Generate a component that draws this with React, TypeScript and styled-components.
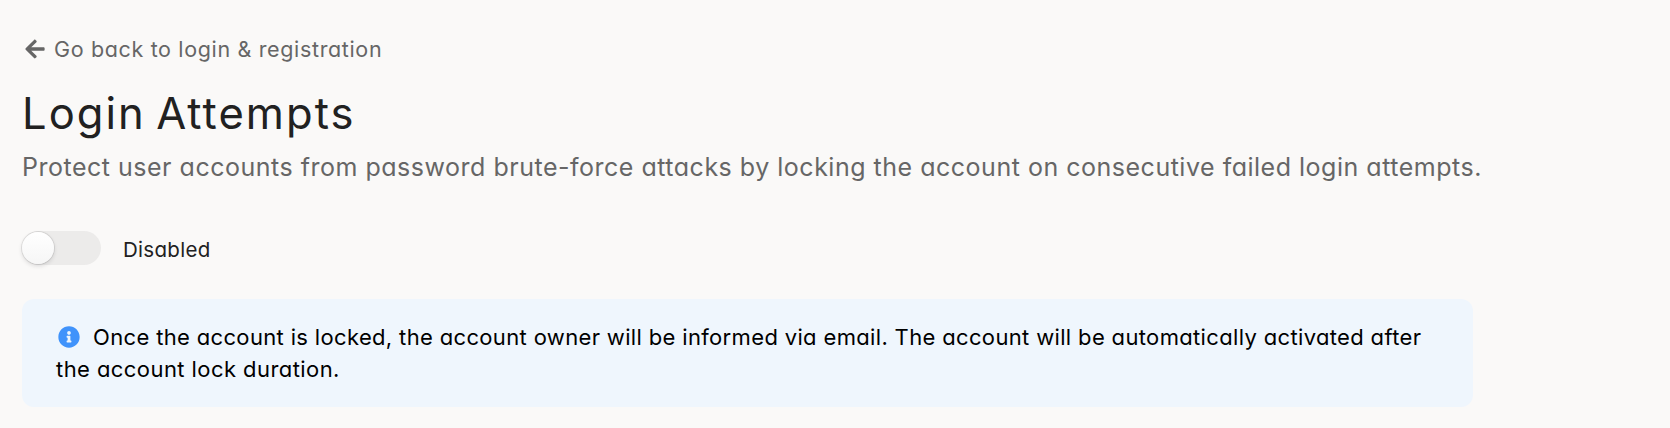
import React, { useState } from "react";
import styled, { createGlobalStyle } from "styled-components";
import { FaArrowLeft, FaInfoCircle } from "react-icons/fa";

const GlobalStyle = createGlobalStyle`
  * { box-sizing: border-box; }
  body {
    margin: 0;
    background: #faf9f8;
    font-family: Inter, "Open Sans", sans-serif;
    font-weight: 400;
    font-feature-settings: "cv11" 1;
  }
`;

const Page = styled.main`
  display: flex;
  flex-direction: column;
  align-items: flex-start;
  min-height: 428px;
  padding: 33px 22px 0;
`;

const BackLink = styled.a`
  display: flex;
  align-items: center;
  height: 32px;
  padding-left: 2px;
  gap: 8px;
  color: #666666;
  font-size: 21.5px;
  line-height: 32px;
  letter-spacing: 0.65px;
  white-space: nowrap;
  cursor: pointer;
`;

const ArrowIcon = styled(FaArrowLeft)`
  width: 22px;
  height: 22px;
  margin-top: -1px;
`;

const Title = styled.h1`
  margin: 21px 0 0 0;
  color: #212121;
  font-size: 43.5px;
  font-weight: 400;
  line-height: 54px;
  letter-spacing: 2.05px;
  word-spacing: -4px;
  white-space: nowrap;
`;

const Subtitle = styled.p`
  margin: 11px 0 0 0;
  color: #666666;
  font-size: 25px;
  line-height: 32px;
  letter-spacing: 0.51px;
  white-space: nowrap;
`;

const SwitchRow = styled.div`
  display: flex;
  align-items: center;
  height: 34px;
  margin-top: 48px;
  gap: 22px;
`;

const Track = styled.button<{ $on: boolean }>`
  display: flex;
  align-items: center;
  justify-content: ${(p) => (p.$on ? "flex-end" : "flex-start")};
  width: 79px;
  height: 34px;
  padding: 0;
  border: 0;
  border-radius: 17px;
  background: ${(p) => (p.$on ? "#ff7300" : "#ecebea")};
  cursor: pointer;
`;

const Knob = styled.span`
  width: 32px;
  height: 32px;
  border-radius: 50%;
  background: linear-gradient(#ffffff, #f6f6f6);
  box-shadow: 0 2px 4px rgba(34, 36, 38, 0.15), 0 0 0 1px rgba(34, 36, 38, 0.09);
`;

const SwitchLabel = styled.span`
  padding-top: 4px;
  color: #212121;
  font-size: 20.5px;
  line-height: 30px;
  letter-spacing: 0.3px;
`;

const Message = styled.div`
  width: 1451px;
  height: 108px;
  margin-top: 34px;
  padding: 22px 34px;
  border-radius: 12px;
  background: #eff6fd;
  color: #000000;
  font-size: 22px;
  line-height: 32px;
`;

const MessageLine = styled.div<{ $spacing: number }>`
  display: flex;
  align-items: center;
  letter-spacing: ${(p) => p.$spacing}px;
  white-space: nowrap;
`;

const InfoIcon = styled(FaInfoCircle)`
  flex: none;
  width: 22px;
  height: 22px;
  margin: 0 13px 0 2px;
  color: #4093fb;
`;

export default function App() {
  const [enabled, setEnabled] = useState(false);
  return (
    <Page>
      <GlobalStyle />
      <BackLink>
        <ArrowIcon />
        <span>Go back to login &amp; registration</span>
      </BackLink>
      <Title>Login Attempts</Title>
      <Subtitle>
        Protect user accounts from password brute-force attacks by locking the account on consecutive failed login attempts.
      </Subtitle>
      <SwitchRow>
        <Track type="button" role="switch" aria-checked={enabled} $on={enabled} onClick={() => setEnabled(!enabled)}>
          <Knob />
        </Track>
        <SwitchLabel>{enabled ? "Enabled" : "Disabled"}</SwitchLabel>
      </SwitchRow>
      <Message>
        <MessageLine $spacing={0.345}>
          <InfoIcon />
          <span>
            Once the account is locked, the account owner will be informed via email. The account will be automatically activated after
          </span>
        </MessageLine>
        <MessageLine $spacing={0.43}>the account lock duration.</MessageLine>
      </Message>
    </Page>
  );
}
